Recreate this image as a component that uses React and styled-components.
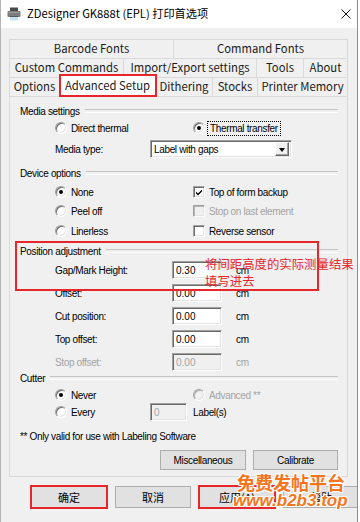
import React from 'react';
import styled, { createGlobalStyle } from 'styled-components';

const GlobalStyle = createGlobalStyle`
  html, body { margin: 0; padding: 0; background: #ffffff; }
  body { font-family: "Liberation Sans", Arial, sans-serif; }
  * { box-sizing: border-box; }
`;

const CJK = `"Noto Sans CJK SC", "Noto Sans", sans-serif`;

const Window = styled.div`
  position: relative;
  width: 358px;
  height: 522px;
  background: #f0f0f0;
  border-left: 1px solid #b4b4b4;
  border-right: 1px solid #8c8c8c;
  display: flex;
  flex-direction: column;
  overflow: hidden;
  font-family: "Liberation Sans", Arial, sans-serif;
  font-size: 10px;
  letter-spacing: -0.35px;
  color: #000;
`;

const TitleBar = styled.div`
  height: 28px;
  flex: none;
  background: #fff;
  display: flex;
  align-items: center;
  gap: 6px;
  padding: 0 6px 0 6px;
  font-family: ${CJK};
  font-size: 11.2px;
  letter-spacing: 0;
  color: #000;
`;

const TitleText = styled.span`
  flex: 1;
  line-height: 1;
`;

const Body = styled.div`
  padding: 11px 0 0 8px;
  display: flex;
  flex-direction: column;
`;

const TabRows = styled.div`
  width: 339px;
  display: flex;
  flex-direction: column;
`;

const TabRow = styled.div`
  display: flex;
  height: 19px;
  align-items: flex-start;
`;

const Tab = styled.div`
  position: relative;
  width: ${p => p.$w}px;
  height: ${p => (p.$active ? 21 : 19)}px;
  margin-top: ${p => (p.$active ? -2 : 0)}px;
  z-index: ${p => (p.$active ? 2 : 1)};
  display: flex;
  align-items: center;
  justify-content: center;
  background: ${p => (p.$active ? '#ffffff' : '#f0f0f0')};
  border-top: 1px solid #d9d9d9;
  border-right: 1px solid #d9d9d9;
  &:first-child { border-left: 1px solid #d9d9d9; }
  font-family: ${CJK};
  font-size: 11.3px;
  letter-spacing: 0;
  line-height: 1;
  color: #1a1a1a;
  white-space: nowrap;
  outline: ${p => (p.$annotated ? '2px solid #e5262b' : 'none')};
  outline-offset: -1px;
`;

const Panel = styled.div`
  position: relative;
  width: 339px;
  height: 381px;
  border: 1px solid #d9d9d9;
  background: #f0f0f0;
  padding: 7px 9px 0 10px;
  display: flex;
  flex-direction: column;
`;

const GroupHeader = styled.div`
  display: flex;
  align-items: center;
  gap: 5px;
  height: 14px;
  margin-top: ${p => p.$mt || 0}px;
  white-space: nowrap;
  &::after {
    content: '';
    flex: 1;
    height: 2px;
    border-top: 1px solid #c4c4c4;
    border-bottom: 1px solid #ffffff;
  }
`;

const Row = styled.div`
  display: flex;
  align-items: center;
  height: ${p => p.$h || 18}px;
  margin-top: ${p => p.$mt || 0}px;
  padding-left: ${p => (p.$indent === undefined ? 35 : p.$indent)}px;
`;

const Col = styled.div`
  width: ${p => p.$w}px;
  flex: none;
  display: flex;
  align-items: center;
`;

const Option = styled.label`
  display: flex;
  align-items: center;
  gap: 4px;
  white-space: nowrap;
  color: ${p => (p.$disabled ? '#a3a3a3' : '#000')};
`;

const RadioCircle = styled.span`
  width: 12px;
  height: 12px;
  flex: none;
  border-radius: 50%;
  background: ${p => (p.$disabled ? '#f0f0f0' : '#ffffff')};
  border: 1px solid;
  border-color: #a0a0a0 #ffffff #ffffff #a0a0a0;
  box-shadow: inset 1px 1px 0 ${p => (p.$disabled ? '#b5b5b5' : '#6a6a6a')}, inset -1px -1px 0 #e3e3e3;
  display: flex;
  align-items: center;
  justify-content: center;
  &::after {
    content: '';
    width: 4px;
    height: 4px;
    border-radius: 50%;
    background: #000;
    display: ${p => (p.$checked ? 'block' : 'none')};
  }
`;

const CheckBox = styled.span`
  width: 12px;
  height: 12px;
  flex: none;
  background: ${p => (p.$disabled ? '#f0f0f0' : '#ffffff')};
  border: 1px solid;
  border-color: #a0a0a0 #ffffff #ffffff #a0a0a0;
  box-shadow: inset 1px 1px 0 ${p => (p.$disabled ? '#b5b5b5' : '#6a6a6a')}, inset -1px -1px 0 #e3e3e3;
  display: flex;
  align-items: center;
  justify-content: center;
`;

const FocusLabel = styled.span`
  outline: 1px dotted #000;
  outline-offset: 1px;
  padding: 0 1px;
`;

const FieldLabel = styled.span`
  width: ${p => p.$w}px;
  flex: none;
  white-space: nowrap;
  color: ${p => (p.$disabled ? '#a3a3a3' : '#000')};
`;

const Sunken = styled.div`
  height: 18px;
  width: ${p => p.$w}px;
  flex: none;
  background: ${p => (p.$disabled ? '#f0f0f0' : '#ffffff')};
  border: 1px solid;
  border-color: #a0a0a0 #ffffff #ffffff #a0a0a0;
  box-shadow: inset 1px 1px 0 #6a6a6a, inset -1px -1px 0 #e3e3e3;
  display: flex;
  align-items: center;
  padding: 0 2px 0 3px;
  color: ${p => (p.$disabled ? '#a3a3a3' : '#000')};
  letter-spacing: 0;
  white-space: nowrap;
`;

const SelectText = styled.span`
  flex: 1;
  letter-spacing: -0.35px;
`;

const DropButton = styled.span`
  width: 14px;
  height: 14px;
  background: #f0f0f0;
  border: 1px solid;
  border-color: #ffffff #696969 #696969 #ffffff;
  box-shadow: inset -1px -1px 0 #a0a0a0;
  display: flex;
  align-items: center;
  justify-content: center;
  &::after {
    content: '';
    width: 0;
    height: 0;
    border-left: 3.5px solid transparent;
    border-right: 3.5px solid transparent;
    border-top: 4px solid #000;
    margin-top: 1px;
  }
`;

const Unit = styled.span`
  margin-left: ${p => p.$gap || 14}px;
  white-space: nowrap;
  color: ${p => (p.$disabled ? '#a3a3a3' : '#000')};
`;

const Note = styled.div`
  height: 14px;
  margin-top: 8px;
  display: flex;
  align-items: center;
  white-space: nowrap;
`;

const ButtonRow = styled.div`
  display: flex;
  justify-content: flex-end;
  gap: 7px;
  margin-top: 7px;
  height: 20px;
`;

const Button = styled.div`
  width: ${p => p.$w}px;
  height: ${p => p.$h || 20}px;
  flex: none;
  display: flex;
  align-items: center;
  justify-content: center;
  background: #e1e1e1;
  border: 1px solid ${p => (p.$default ? '#0078d7' : '#adadad')};
  white-space: nowrap;
  font-family: ${p => (p.$cjk ? CJK : `"Liberation Sans", Arial, sans-serif`)};
  font-size: ${p => (p.$cjk ? '11px' : '10px')};
  letter-spacing: ${p => (p.$cjk ? '0' : '-0.35px')};
  outline: ${p => (p.$annotated ? '2px solid #e5262b' : 'none')};
  outline-offset: -1px;
`;

const Footer = styled.div`
  display: flex;
  gap: 8px;
  margin-top: 9px;
  padding-left: 22px;
`;

const AnnotationBox = styled.div`
  position: absolute;
  left: 5px;
  top: 144px;
  width: 304px;
  height: 50px;
  border: 2px solid #e5262b;
  pointer-events: none;
`;

const AnnotationText = styled.div`
  position: absolute;
  left: 195px;
  top: 159px;
  font-family: ${CJK};
  font-size: 12.4px;
  line-height: 17px;
  letter-spacing: 0;
  color: #e5262b;
  white-space: nowrap;
`;

const Watermark = styled.div`
  position: absolute;
  left: 236px;
  top: 472px;
  display: flex;
  flex-direction: column;
  align-items: flex-start;
  color: #f5761c;
  letter-spacing: 0;
  text-shadow: 1px 0 0 #fff, -1px 0 0 #fff, 0 1px 0 #fff, 0 -1px 0 #fff, 1px 1px 0 #fff, -1px -1px 0 #fff, 1px -1px 0 #fff, -1px 1px 0 #fff;
  pointer-events: none;
`;

const WatermarkCn = styled.span`
  font-family: ${CJK};
  font-weight: 700;
  font-size: 18px;
  line-height: 20px;
`;

const WatermarkUrl = styled.span`
  font-family: "Liberation Sans", Arial, sans-serif;
  font-weight: 700;
  font-style: italic;
  font-size: 17px;
  line-height: 18px;
  margin-left: -4px;
`;

const PrinterIcon = () => (
  <svg width="14" height="14" viewBox="0 0 14 14">
    <rect x="3" y="0.5" width="8" height="4" fill="#4a4a4a" />
    <rect x="0.5" y="4" width="13" height="6" rx="1" fill="#7d7d7d" />
    <rect x="1.5" y="5" width="11" height="1" fill="#9a9a9a" />
    <rect x="3" y="9" width="8" height="4.5" fill="#bfe3ee" />
    <rect x="3" y="9" width="8" height="1" fill="#5a5a5a" />
  </svg>
);

const CloseIcon = () => (
  <svg width="10" height="10" viewBox="0 0 10 10">
    <path d="M0.5 0.5 L9.5 9.5 M9.5 0.5 L0.5 9.5" stroke="#111" strokeWidth="1" fill="none" />
  </svg>
);

const CheckMark = ({ disabled }) => (
  <svg width="8" height="8" viewBox="0 0 8 8">
    <path d="M1 3.5 L3 5.5 L7 1.5 L7 3.5 L3 7.5 L1 5.5 Z" fill={disabled ? '#a0a0a0' : '#000'} />
  </svg>
);

const Radio = ({ checked, disabled, children, focus }) => (
  <Option $disabled={disabled}>
    <RadioCircle $checked={checked} $disabled={disabled} />
    {focus ? <FocusLabel>{children}</FocusLabel> : <span>{children}</span>}
  </Option>
);

const Check = ({ checked, disabled, children }) => (
  <Option $disabled={disabled}>
    <CheckBox $disabled={disabled}>{checked && <CheckMark disabled={disabled} />}</CheckBox>
    <span>{children}</span>
  </Option>
);

const tabRows = [
  [
    { label: 'Barcode Fonts', w: 165 },
    { label: 'Command Fonts', w: 174 },
  ],
  [
    { label: 'Custom Commands', w: 115 },
    { label: 'Import/Export settings', w: 133 },
    { label: 'Tools', w: 47 },
    { label: 'About', w: 44 },
  ],
  [
    { label: 'Options', w: 51 },
    { label: 'Advanced Setup', w: 96, active: true },
    { label: 'Dithering', w: 57 },
    { label: 'Stocks', w: 45 },
    { label: 'Printer Memory', w: 90 },
  ],
];

const positionFields = [
  { label: 'Gap/Mark Height:', value: '0.30', mt: 3 },
  { label: 'Offset:', value: '0.00', mt: 5 },
  { label: 'Cut position:', value: '0.00', mt: 5 },
  { label: 'Top offset:', value: '0.00', mt: 5 },
  { label: 'Stop offset:', value: '0.00', mt: 5, disabled: true },
];

export default function App() {
  return (
    <>
      <GlobalStyle />
      <Window>
        <TitleBar>
          <PrinterIcon />
          <TitleText>ZDesigner GK888t (EPL) 打印首选项</TitleText>
          <CloseIcon />
        </TitleBar>
        <Body>
          <TabRows>
            {tabRows.map((row, i) => (
              <TabRow key={i}>
                {row.map(t => (
                  <Tab key={t.label} $w={t.w} $active={t.active} $annotated={t.active}>
                    {t.label}
                  </Tab>
                ))}
              </TabRow>
            ))}
          </TabRows>
          <Panel>
            <GroupHeader>Media settings</GroupHeader>
            <Row $mt={1}>
              <Col $w={138}><Radio>Direct thermal</Radio></Col>
              <Radio checked focus>Thermal transfer</Radio>
            </Row>
            <Row $mt={3}>
              <FieldLabel $w={95}>Media type:</FieldLabel>
              <Sunken $w={142}>
                <SelectText>Label with gaps</SelectText>
                <DropButton />
              </Sunken>
            </Row>

            <GroupHeader $mt={8}>Device options</GroupHeader>
            <Row $mt={3}>
              <Col $w={138}><Radio checked>None</Radio></Col>
              <Check checked>Top of form backup</Check>
            </Row>
            <Row $mt={1}>
              <Col $w={138}><Radio>Peel off</Radio></Col>
              <Check disabled>Stop on last element</Check>
            </Row>
            <Row $mt={2}>
              <Col $w={138}><Radio>Linerless</Radio></Col>
              <Check>Reverse sensor</Check>
            </Row>

            <GroupHeader $mt={4}>Position adjustment</GroupHeader>
            {positionFields.map(f => (
              <Row key={f.label} $mt={f.mt}>
                <FieldLabel $w={117} $disabled={f.disabled}>{f.label}</FieldLabel>
                <Sunken $w={50} $disabled={f.disabled}>{f.value}</Sunken>
                <Unit $disabled={f.disabled}>cm</Unit>
              </Row>
            ))}

            <GroupHeader>Cutter</GroupHeader>
            <Row $mt={2} $h={16}>
              <Col $w={138}><Radio checked>Never</Radio></Col>
              <Radio disabled>Advanced **</Radio>
            </Row>
            <Row>
              <Col $w={95}><Radio>Every</Radio></Col>
              <Sunken $w={37} $disabled>0</Sunken>
              <Unit $gap={6}>Label(s)</Unit>
            </Row>

            <Note>** Only valid for use with Labeling Software</Note>
            <ButtonRow>
              <Button $w={86}>Miscellaneous</Button>
              <Button $w={85}>Calibrate</Button>
            </ButtonRow>

            <AnnotationBox />
            <AnnotationText>
              将间距高度的实际测量结果
              <br />
              填写进去
            </AnnotationText>
          </Panel>
          <Footer>
            <Button $w={76} $h={22} $cjk $default $annotated>确定</Button>
            <Button $w={76} $h={22} $cjk>取消</Button>
            <Button $w={76} $h={22} $cjk $annotated>应用(A)</Button>
            <Button $w={76} $h={22} $cjk>帮助</Button>
          </Footer>
        </Body>
        <Watermark>
          <WatermarkCn>免费发帖平台</WatermarkCn>
          <WatermarkUrl>www.b2b3.top</WatermarkUrl>
        </Watermark>
      </Window>
    </>
  );
}
